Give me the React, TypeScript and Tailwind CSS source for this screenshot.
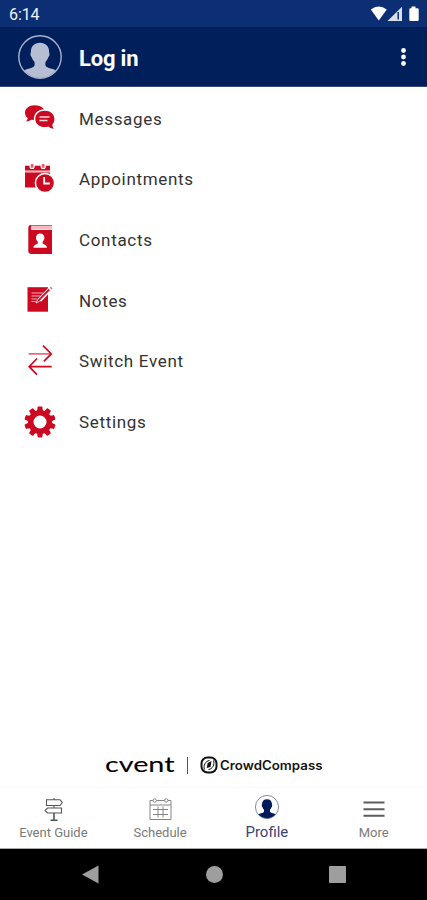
import type { ReactNode } from "react";

const RED = "#cb0a22";
const NAVY = "#001b59";

function PersonIcon({ size, color, ring }: { size: number; color: string; ring: string }) {
  return (
    <svg width={size} height={size} viewBox="0 0 44 44">
      <clipPath id={`person-${size}`}>
        <circle cx="22" cy="22" r="21" />
      </clipPath>
      <path
        clipPath={`url(#person-${size})`}
        fill={color}
        d="M22 7.700c5.700 0 9.100 3.600 9.100 9 0 1.300.7 1.800.4 3.400-.3 1.400-1.100 1.900-1.500 3-.5 1.600-1.300 2.700-2.600 3.800v3.300c1.300 3.500 8.800 3.200 12.800 6.300V44H4v-7.500c4-3.100 11.500-2.800 12.600-6.300v-3.300c-1.300-1.100-2.100-2.200-2.600-3.800-.4-1.100-1.200-1.600-1.500-3-.3-1.600.4-2.100.4-3.400 0-5.400 3.400-9 9.100-9z"
      />
      <circle cx="22" cy="22" r="21.200" fill="none" stroke={ring} strokeWidth="1.400" />
    </svg>
  );
}

function MessagesIcon() {
  return (
    <svg width="40" height="40" viewBox="0 0 40 40" fill={RED}>
      <path d="M14.500 7.300c-5.500 0-9.500 3.300-9.500 7.400 0 2.200 1 3.900 2.700 5.200-.1 1.500-.9 2.600-1.900 3.500 2.300 0 4-.6 5.400-1.700l2.600.4C13.500 16 17.500 11.500 24 11.200c-1.700-2.500-5.200-3.900-9.500-3.900z" />
      <path d="M24.800 12.700c-5.400 0-9.500 3.500-9.500 8.200s4.100 8.100 9.500 8.100c1.300 0 2.600-.2 3.700-.6 1.500 1.400 3.200 2.200 5.500 2.300-.9-1.100-1.600-2.300-1.700-4 1.300-1.500 2.100-3.500 2.100-5.800 0-4.700-4.200-8.200-9.600-8.200z" />
      <path d="M19.500 19h10M19.500 22.500h8" stroke="#fbdde0" strokeWidth="1.400" />
    </svg>
  );
}

function AppointmentsIcon() {
  return (
    <svg width="40" height="40" viewBox="0 0 40 40" fill={RED}>
      <path d="M5 6.700h25v5H5z" />
      <path d="M5 11.700h25v2H5z" fill="#f5b5bc" />
      <path d="M5 13.500h25V28.500H5z" />
      <path d="M9.500 5.500h5.200v2a2.600 2.600 0 0 1-5.200 0zM20.600 5.500h5.200v2a2.600 2.600 0 0 1-5.200 0z" fill="white" />
      <path d="M10.800 5h2.600v3.800h-2.600zM21.900 5h2.600v3.800h-2.600z" fill="#dc6170" />
      <circle cx="25" cy="24" r="9.600" stroke="white" strokeWidth="1.500" />
      <path d="M24.200 18v6.500h5.600" fill="none" stroke="white" strokeWidth="1.800" />
    </svg>
  );
}

function ContactsIcon() {
  return (
    <svg width="40" height="40" viewBox="0 0 40 40" fill={RED}>
      <path d="M11 5h21v1.500H12c-1.500 0-1.500 3.500 0 3.500h20v24H11.500c-2 0-3.200-1.200-3.200-3V8c0-1.800 1-3 2.700-3z" />
      <path d="M11.500 6h20.500v3.500H11.500z" fill="#f3bcc2" />
      <path d="M11 5h21v1H11z" fill="#dc6170" />
      <path d="M20.200 13.500c2.700 0 4.200 1.700 4.200 4.200 0 1.700-.8 3.100-1.800 4.100v1.400c.7 1.500 4.200 1 4.400 4.600h-13.600c.2-3.600 3.700-3.100 4.400-4.600v-1.400c-1-1-1.800-2.400-1.800-4.100 0-2.500 1.500-4.200 4.200-4.200z" fill="white" />
    </svg>
  );
}

function NotesIcon() {
  return (
    <svg width="40" height="40" viewBox="0 0 40 40" fill="none">
      <path d="M7.500 7.200h20.500v24.500H7.500z" fill={RED} />
      <path d="M11.500 13h11.500M11.500 16h9M11.500 19h6M11.500 21.500h5" stroke="#f2a9b2" strokeWidth="1.200" />
      <path d="M19.500 20.200 31.300 7.700" stroke="white" strokeWidth="4.200" />
      <path d="m16 23 1.700-3.400L28.600 8.500l1.700 1.700-11 11.200z" fill={RED} stroke="white" strokeWidth=".8" />
      <path d="m30.300 7.300 1.700 1.600" stroke="#df6675" strokeWidth="1.500" />
    </svg>
  );
}

function SwitchIcon() {
  return (
    <svg width="40" height="40" viewBox="0 0 40 40" fill="none" stroke={RED} strokeWidth="1.700">
      <path d="M8.700 12.900h22.500" stroke="#e06a78" />
      <path d="m23 4.600 8.300 8.300-7.500 7.500M31.700 25.700H9.200M17 17.500l-7.800 8.200 7.800 8" />
    </svg>
  );
}

const TEETH = [0, 36, 72, 108, 144, 180, 216, 252, 288, 324];

function SettingsIcon() {
  return (
    <svg width="40" height="40" viewBox="0 0 40 40" fill={RED}>
      {TEETH.map((angle) => (
        <path key={angle} d="M17 10l.6-4.800q.1-.8.900-.8h3q.8 0 .9.800l.6 4.800z" transform={`rotate(${angle} 20 20)`} />
      ))}
      <circle cx="20" cy="20" r="9.300" fill="none" stroke={RED} strokeWidth="5.600" />
    </svg>
  );
}

function GuideIcon() {
  return (
    <svg width="24" height="24" viewBox="0 0 24 24" fill="none" stroke="#555" strokeWidth="1.100">
      <path d="M13 0v2M13 7.500v2.200M5.500 1.700h13.500l2.300 2.900-2.300 2.900h-13.500zM20.500 10H6.500L4 12.500 6.500 15h14z" />
      <path d="M13 15v7M9.500 22.300h7" strokeWidth="1.600" />
    </svg>
  );
}

function ScheduleIcon() {
  return (
    <svg width="24" height="24" viewBox="0 0 24 24" fill="none" stroke="#858585">
      <path d="M5 2.500H2V21.500h21V2.500h-3M8.500 2.500h8M2 7h21" />
      <circle cx="6.700" cy="2.500" r="1.700" />
      <circle cx="18.300" cy="2.500" r="1.700" />
      <path d="M5 11.500h15M5 16.500h15M10 8.500v11M15 8.500v11" />
    </svg>
  );
}

function MoreIcon() {
  return (
    <svg width="24" height="24" viewBox="0 0 24 24" stroke="#5c5c5c" strokeWidth="2">
      <path d="M1.500 4.500h21M1.500 11.300h21M1.500 17.800h21" />
    </svg>
  );
}

const MENU: { label: string; icon: ReactNode }[] = [
  { label: "Messages", icon: <MessagesIcon /> },
  { label: "Appointments", icon: <AppointmentsIcon /> },
  { label: "Contacts", icon: <ContactsIcon /> },
  { label: "Notes", icon: <NotesIcon /> },
  { label: "Switch Event", icon: <SwitchIcon /> },
  { label: "Settings", icon: <SettingsIcon /> },
];

const TABS: { label: string; icon: ReactNode; active?: boolean }[] = [
  { label: "Event Guide", icon: <GuideIcon /> },
  { label: "Schedule", icon: <ScheduleIcon /> },
  { label: "Profile", icon: <PersonIcon size={24} color={NAVY} ring="#59658c" />, active: true },
  { label: "More", icon: <MoreIcon /> },
];

export default function App() {
  return (
    <div className="flex h-[900px] w-[427px] flex-col overflow-hidden bg-white font-['Roboto',sans-serif]">
      {/* Status bar */}
      <div className="flex h-[27px] shrink-0 items-center justify-between bg-[#0c2f73] pr-[7px] pl-[9px] text-white">
        <span className="pt-[2px] text-[16px] leading-none tracking-[-0.1px] text-[#f0f3f8]">6:14</span>
        <svg width="50" height="16" viewBox="0 0 50 16" fill="white">
          <path d="M.8 3.500Q8.700-2.500 16.800 3.500L8.800 14.500z" />
          <path d="M32 .8V15H17.500z" opacity=".85" />
          <path d="M28.200 6v7.500" stroke="#0c2f73" strokeWidth="1.500" />
          <path d="M41.500.5h4v1.700h2q1.200 0 1.200 1.200v10.400q0 1.200-1.200 1.200h-7q-1.200 0-1.200-1.200V3.400q0-1.200 1.200-1.200h1z" />
        </svg>
      </div>

      {/* Header */}
      <header className="flex h-[60px] shrink-0 items-center border-b border-[#3d4672] bg-[#001f5b] pr-5 pl-[18px]">
        <PersonIcon size={44} color="#b6bed3" ring="#a7b1c9" />
        <h1 className="ml-[17px] pt-[4px] text-[22px] leading-none font-bold tracking-[-0.2px] text-white">Log in</h1>
        <svg className="ml-auto" width="8" height="20" viewBox="0 0 8 20" fill="white">
          <circle cx="4.500" cy="3.500" r="2.400" />
          <circle cx="4.500" cy="10" r="2.400" />
          <circle cx="4.500" cy="16.500" r="2.400" />
        </svg>
      </header>

      {/* Menu */}
      <nav className="pt-[0.8px]">
        {MENU.map((item) => (
          <a key={item.label} className="flex h-[60.7px] items-center pl-5">
            {item.icon}
            <span className="ml-[19px] pt-[2px] text-[17px] leading-none tracking-[0.68px] text-[#333]">{item.label}</span>
          </a>
        ))}
      </nav>

      {/* Branding */}
      <div className="mt-auto mb-[11px] flex h-[22px] items-center justify-center text-black">
        <svg className="overflow-visible" width="70" height="24" viewBox="0 0 70 24">
          <text x="0" y="19.200" fontFamily="Lato, sans-serif" fontSize="21" textLength="69.500" lengthAdjust="spacingAndGlyphs" stroke="black" strokeWidth=".1">
            cvent
          </text>
        </svg>
        <span className="ml-3 h-[17px] w-px bg-[#555]" />
        <svg className="ml-[12px]" width="18" height="18" viewBox="0 0 18 18" fill="none" stroke="#111">
          <rect x="1.500" y="1.500" width="15" height="15" rx="6" strokeWidth="2" />
          <path d="M4.500 13.500c-1.500-4 1-8.500 5-9M13.500 4.500c1.500 4-1 8.500-5 9" strokeWidth="1" />
          <path d="m6.700 12 1-5L11.500 5l-1 6z" fill="#111" stroke="none" />
        </svg>
        <svg className="ml-[2px] overflow-visible" width="103" height="20" viewBox="0 0 103 20">
          <text x="0" y="14.700" fontFamily="Inter, sans-serif" fontWeight="600" fontSize="12.500" textLength="102.500" lengthAdjust="spacingAndGlyphs" fill="#151515">
            CrowdCompass
          </text>
        </svg>
      </div>

      {/* Bottom tabs */}
      <div className="grid h-[62px] shrink-0 grid-cols-4 border-t border-b border-t-[#f8f8f8] border-b-[#aaa]">
        {TABS.map((tab) => (
          <div
            key={tab.label}
            className={
              tab.active
                ? "flex flex-col items-center pt-[7px] text-[15px] text-[#3b4474]"
                : "flex flex-col items-center pt-[10px] text-[13px] text-[#7a7a7a]"
            }
          >
            {tab.icon}
            <span className={tab.active ? "mt-[6px] leading-none" : "mt-[4px] leading-none"}>{tab.label}</span>
          </div>
        ))}
      </div>

      {/* System navigation */}
      <div className="flex h-[51px] shrink-0 items-center justify-center gap-[106px] bg-black">
        <svg width="18" height="20" viewBox="0 0 18 20" fill="#9e9e9e">
          <path d="M0 9.500 16.500 .5v18z" />
        </svg>
        <span className="size-[17px] rounded-full bg-[#9e9e9e]" />
        <span className="size-[17px] rounded-[1px] bg-[#9e9e9e]" />
      </div>
    </div>
  );
}
